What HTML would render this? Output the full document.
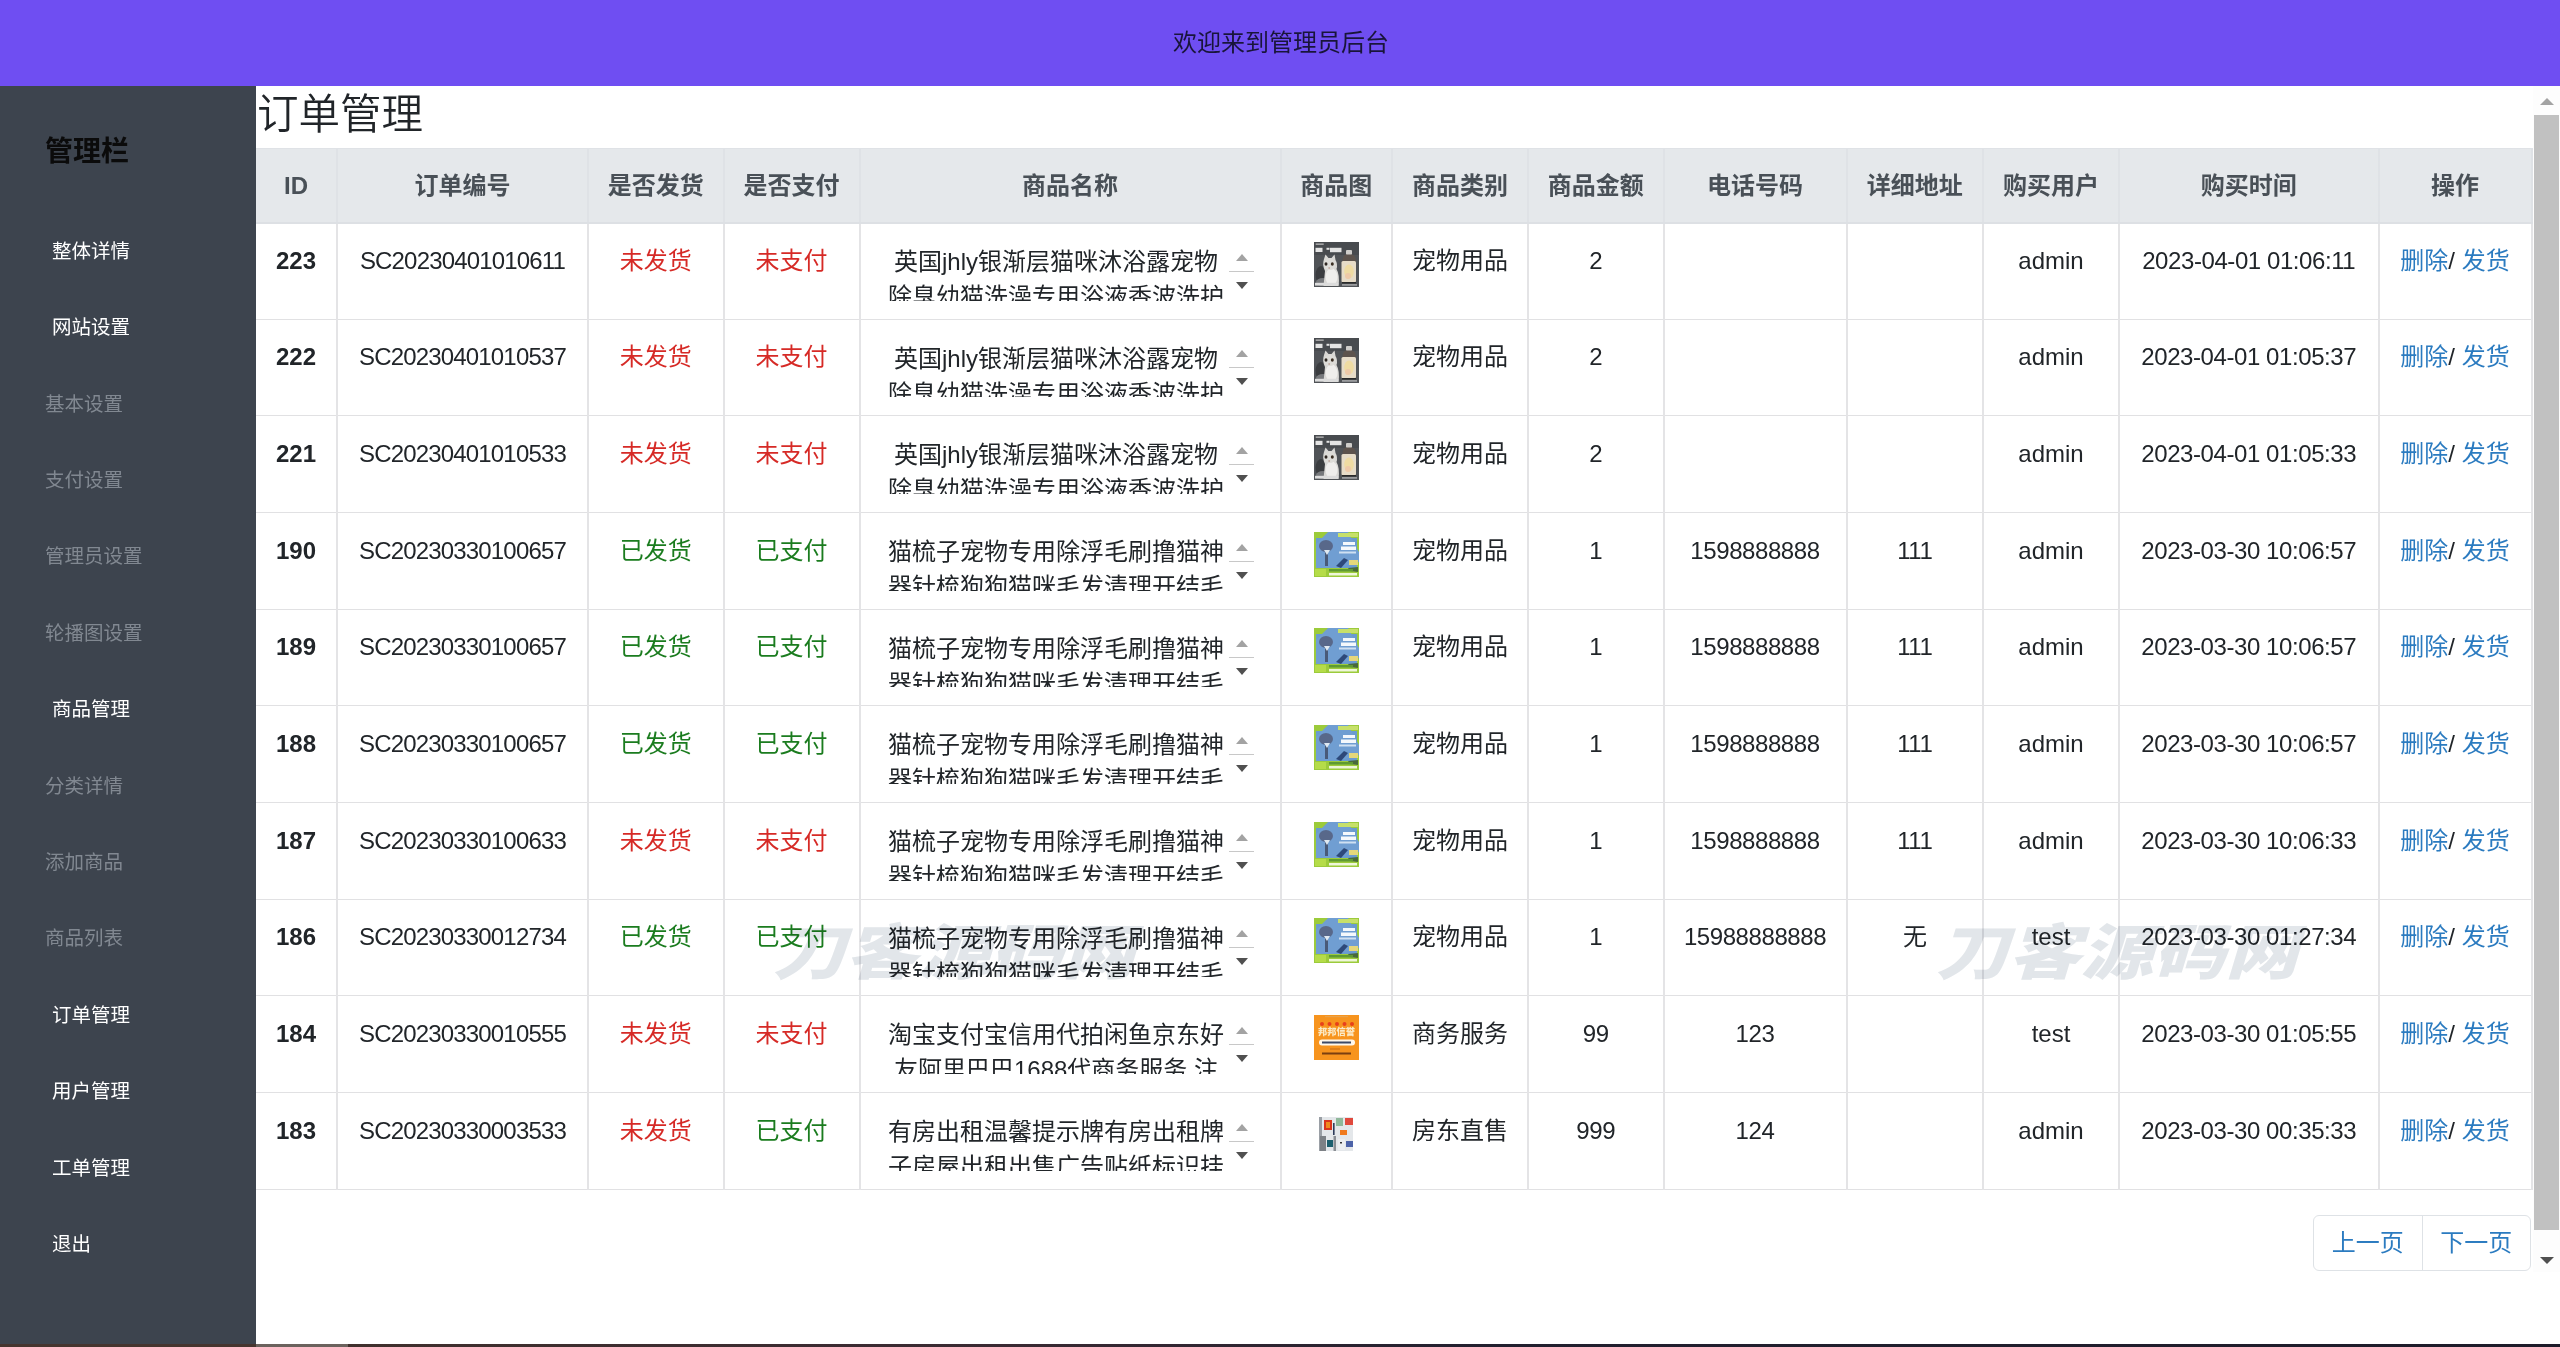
<!DOCTYPE html>
<html lang="zh-CN">
<head>
<meta charset="utf-8">
<title>订单管理</title>
<style>
html,body{margin:0;padding:0}
body{width:2560px;height:1347px;overflow:hidden;background:#fff;position:relative;
 font-family:"Liberation Sans","Noto Sans CJK SC",sans-serif;color:#212529;font-size:24px;line-height:36px}
#top{position:absolute;left:0;top:0;width:2560px;height:86px;box-sizing:border-box;padding-left:2px;background:#6f4ef2;color:#19153a;
 font-size:24px;line-height:86px;text-align:center}
#side{position:absolute;left:0;top:86px;width:256px;height:1261px;background:#3d444e}
#side .sh{position:absolute;left:45px;top:45px;margin:0;font-size:28px;line-height:42px;font-weight:bold;color:#0b0b0b}
#side a{position:absolute;display:block;margin-top:1px;font-size:19.5px;line-height:76.4px;white-space:nowrap}
#side a.m{left:52px;color:#fff}
#side a.s{left:45px;color:#818891}
#main{position:absolute;left:256px;top:86px;width:2304px;height:1261px}
.title{position:absolute;left:1px;top:4px;margin:0;font-size:41.5px;line-height:50px;font-weight:350;color:#212529;white-space:nowrap}
#tb{position:absolute;left:0;top:62px;width:2275.5px;border-collapse:collapse;table-layout:fixed}
#tb th,#tb td{border:1px solid #e1e1e3;border-left:2px solid #e4e4e6;border-right:2px solid #e4e4e6;padding:19.7px 0 0 0;text-align:center;vertical-align:top;white-space:nowrap;overflow:hidden;box-sizing:border-box}
#tb thead th{height:74px;background:#e5e8eb;color:#495057;font-weight:bold;padding-top:19px;border-color:#dfe2e6;border-bottom:2px solid #dde0e4}
#tb tbody tr{height:96.67px}
#tb .id{font-weight:bold}
.r{color:#d62a26}
.g{color:#1b7c1f}
.op a{color:#2b7bc0}
.box{position:relative;margin:1px 0 0 21px;width:372.5px;height:57px;overflow:hidden;text-align:left}
.box .tx{width:347px;text-align:center;line-height:35px;margin:0.3px 0 0 1px}
.sb{position:absolute;right:0;top:0;width:25.5px;height:57px}
.sb i{position:absolute;display:block}
.sb .up{left:7px;top:10px;border:6.5px solid transparent;border-top:0;border-bottom:7px solid #a3a3a3}
.sb .dn{left:7px;top:38px;border:6.5px solid transparent;border-bottom:0;border-top:7px solid #505050}
.sb .th{left:0;top:27px;width:25.5px;height:1px;background:#c8c8c8}
.im svg{display:block;margin:-1px auto 0;position:relative;left:0.5px}
#pg{position:absolute;left:2057px;top:1129px;width:218px;height:56px;border:1px solid #dee2e6;border-radius:6px;box-sizing:border-box;display:flex}
#pg a{flex:1;text-align:center;color:#2b7bc0;font-size:24px;line-height:54px}
#pg a+a{border-left:1px solid #dee2e6}
#vsb{position:absolute;left:2277px;top:0;width:27px;height:1186px;background:#fdfdfd}
#vsb i{position:absolute;display:block}
#vsb .up{left:6.5px;top:12px;border:7px solid transparent;border-top:0;border-bottom:7px solid #a3a3a3}
#vsb .dn{left:6.5px;top:1171px;border:7px solid transparent;border-bottom:0;border-top:7px solid #505050}
#vsb .thumb{left:1px;top:29px;width:25px;height:1115px;background:#c1c1c1}
.wm{position:absolute;font-size:60px;line-height:80px;font-weight:900;font-style:italic;color:#e2e6ea;mix-blend-mode:multiply;white-space:nowrap;transform-origin:0 50%;transform:scaleX(1.205);pointer-events:none;font-family:"Noto Sans CJK SC","Liberation Sans",sans-serif}
#strip{position:absolute;left:0;top:1344px;width:2560px;height:3px;background:linear-gradient(90deg,#46352f 0,#46352f 256px,#6b625d 256px,#6b625d 348px,#40302d 348px,#3a2a33 1000px,#22202f 1500px,#1e1c2a 2560px)}
.lat{letter-spacing:-0.42px}
.no{letter-spacing:-0.83px}
#tb tr>:first-child{border-left:0}
#main{overflow:hidden}
</style>
</head>
<body>
<svg width="0" height="0" style="position:absolute">
<defs>
<filter id="bl" x="-5%" y="-5%" width="110%" height="110%"><feGaussianBlur stdDeviation="0.45"/></filter>
<g id="t-cat">
<rect width="45" height="45" fill="#505357"/>
<rect width="45" height="13" fill="#484b4f"/>
<g filter="url(#bl)">
<ellipse cx="7" cy="33" rx="5.500" ry="9" fill="#3b3d40"/>
<ellipse cx="9" cy="40" rx="7" ry="4" fill="#77797b"/>
<path d="M10 17 L11.500 12.500 L14.500 16 L17.500 16 L20.500 12.500 L21.500 18 Q24 22 22.500 27 Q26 33 24.500 44 L9.500 44 Q10.500 34 11 29 Q8 23 10 17 Z" fill="#d9d8d5"/>
<ellipse cx="17.500" cy="35" rx="6" ry="8.500" fill="#efeeec"/>
<ellipse cx="15.700" cy="22.500" rx="6" ry="5.500" fill="#dddcd8"/>
<ellipse cx="12" cy="22" rx="1.500" ry="1.700" fill="#2d2620"/><ellipse cx="18.300" cy="22" rx="1.500" ry="1.700" fill="#3a2f22"/>
<ellipse cx="15.200" cy="26" rx="1" ry=".7" fill="#b79a90"/>
<rect x="32" y="8" width="6" height="5" rx="1" fill="#cfcdca"/>
<path d="M28.500 20 Q28.500 13 32 12.500 L38 12.500 Q42 13 42 20 Z" fill="#5d534d"/>
<rect x="27.500" y="19" width="14.500" height="21.500" rx="1.500" fill="#e7dcc8"/>
<ellipse cx="35" cy="29.500" rx="4.800" ry="7" fill="#efdba2"/>
<ellipse cx="34" cy="34" rx="3" ry="3" fill="#eec9a8"/>
<rect x="28" y="40" width="14" height="1.500" fill="#2b2a2a"/>
</g>
<g fill="#e4e4e4">
<rect x="1.700" y="1.500" width="8" height="1.300" fill="#b9b9b9"/>
<rect x="1.500" y="5.800" width="7" height="4.200"/><rect x="12.500" y="5.800" width="3" height="2"/><rect x="16" y="5.800" width="11.500" height="4.400"/>
<rect x="1" y="40.800" width="23.500" height="2.800" fill="#dcdcdc"/>
<rect x="28" y="42" width="15" height="1.800" fill="#9b9c9e"/>
</g>
</g>
<g id="t-brush">
<rect width="45" height="45" fill="#9ccb3b"/>
<g filter="url(#bl)">
<rect x="2" y="6" width="41" height="30" fill="#6a9bd0"/>
<path d="M14 0 L34 0 L45 20 L45 30 L24 36 L2 36 L2 12 Z" fill="#6f9ed2"/>
<ellipse cx="12" cy="14" rx="7" ry="6" fill="#59688a"/>
<path d="M11 19 L14 19 L14 34 L11 34 Z" fill="#4a5a78"/>
<path d="M10 18 L16 18 L13 23 Z" fill="#dfe9f2"/>
<rect x="24" y="1" width="20" height="4" fill="#c7e06a"/>
<rect x="29" y="10" width="12" height="3" fill="#f4f8fc"/><rect x="27" y="14.5" width="15" height="3.5" fill="#f4f8fc"/><rect x="25" y="19.5" width="17" height="2" fill="#cfe0f2"/>
<rect x="35" y="28" width="9" height="5" fill="#e5d77a"/>
<path d="M22 34 L30 26 L34 28 L27 36 Z" fill="#2e4a7a"/>
<path d="M34 36 L44 35 L44 40 L36 39 Z" fill="#4a6a3a"/>
<rect x="1" y="37" width="11" height="7" fill="#b5dc4a"/>
<rect x="15" y="37" width="24" height="2.5" fill="#5f9a33"/><rect x="15" y="41" width="28" height="2.5" fill="#eef6d8"/>
</g>
</g>
<g id="t-shop">
<rect width="45" height="45" fill="#f7941e"/>
<g transform="translate(0,-1)">
<rect x="11" y="2" width="23" height="1.200" fill="#e9a24a"/>
<g fill="#e8401c" filter="url(#bl)"><circle cx="8" cy="10" r="2"/><circle cx="15.5" cy="10" r="2"/><circle cx="23" cy="10" r="2"/><circle cx="30.5" cy="10" r="2"/><circle cx="38" cy="10" r="2"/></g>
<text x="22.500" y="21.300" text-anchor="middle" font-family="'Liberation Sans','Noto Sans CJK SC',sans-serif" font-size="9.500" font-weight="900" fill="#fbe9c4" textLength="37" lengthAdjust="spacingAndGlyphs">邦邦信誉</text>
<rect x="5" y="25.500" width="36" height="6" rx="3" fill="#fff7ea"/>
<rect x="8" y="27.500" width="29" height="2" fill="#3d4a66"/>
<rect x="8" y="38.500" width="29" height="2" fill="#7a3f10"/>
<rect x="16" y="34.500" width="10" height="1" fill="#c96a14"/>
</g>
</g>
<g id="t-house">
<rect width="45" height="45" fill="#fff"/>
<g filter="url(#bl)">
<rect x="5" y="5" width="34" height="34" fill="#e4e7ea"/>
<rect x="5" y="5" width="3" height="34" fill="#9a9fa5"/>
<rect x="10" y="8" width="8" height="10" fill="#d9341c"/><rect x="12" y="10" width="4" height="6" fill="#f08a1e"/>
<rect x="19" y="11" width="1.600" height="12" fill="#2d3a5a"/>
<rect x="22" y="6" width="7" height="8" fill="#8fb89a"/>
<rect x="31" y="6" width="8" height="7" fill="#e04a3c"/>
<rect x="26" y="18" width="7" height="5" fill="#f07a1c"/>
<rect x="6" y="24" width="6" height="15" fill="#7d8186"/>
<rect x="13" y="28" width="6" height="7" fill="#1f5f6e"/>
<rect x="19.500" y="24" width="2.500" height="15" fill="#8a8e93"/>
<rect x="24" y="27" width="7" height="11" fill="#eceef0"/><rect x="26" y="30" width="2" height="1.500" fill="#333"/>
<rect x="32" y="29" width="7" height="6" fill="#4e63a8"/>
</g>
</g>
</defs>
</svg>
<div id="top">欢迎来到管理员后台</div>
<div id="side">
<h3 class="sh">管理栏</h3>
<a class="m" style="top:125.8px">整体详情</a>
<a class="m" style="top:202.2px">网站设置</a>
<a class="s" style="top:278.6px">基本设置</a>
<a class="s" style="top:355.0px">支付设置</a>
<a class="s" style="top:431.4px">管理员设置</a>
<a class="s" style="top:507.8px">轮播图设置</a>
<a class="m" style="top:584.2px">商品管理</a>
<a class="s" style="top:660.6px">分类详情</a>
<a class="s" style="top:737.0px">添加商品</a>
<a class="s" style="top:813.4px">商品列表</a>
<a class="m" style="top:889.8px">订单管理</a>
<a class="m" style="top:966.2px">用户管理</a>
<a class="m" style="top:1042.6px">工单管理</a>
<a class="m" style="top:1119.0px">退出</a>
</div>
<div id="main">
<h3 class="title">订单管理</h3>
<table id="tb">
<colgroup><col style="width:81.0px"><col style="width:251.0px"><col style="width:135.5px"><col style="width:136.0px"><col style="width:421.0px"><col style="width:111.5px"><col style="width:136.0px"><col style="width:135.5px"><col style="width:183.0px"><col style="width:136.5px"><col style="width:136.0px"><col style="width:259.5px"><col style="width:153.0px"></colgroup>
<thead><tr><th>ID</th><th>订单编号</th><th>是否发货</th><th>是否支付</th><th>商品名称</th><th>商品图</th><th>商品类别</th><th>商品金额</th><th>电话号码</th><th>详细地址</th><th>购买用户</th><th>购买时间</th><th>操作</th></tr></thead>
<tbody>
<tr><th class="id">223</th><td class="no">SC20230401010611</td><td class="r">未发货</td><td class="r">未支付</td><td class="nm"><div class="box"><div class="tx">英国jhly银渐层猫咪沐浴露宠物<br>除臭幼猫洗澡专用浴液香波洗护</div><div class="sb"><i class="up"></i><i class="th"></i><i class="dn"></i></div></div></td><td class="im"><svg width="45" height="45" viewBox="0 0 45 45"><use href="#t-cat"/></svg></td><td>宠物用品</td><td class="lat">2</td><td class="lat"></td><td class="lat"></td><td>admin</td><td class="lat tm">2023-04-01 01:06:11</td><td class="op"><a>删除</a>/ <a>发货</a></td></tr>
<tr><th class="id">222</th><td class="no">SC20230401010537</td><td class="r">未发货</td><td class="r">未支付</td><td class="nm"><div class="box"><div class="tx">英国jhly银渐层猫咪沐浴露宠物<br>除臭幼猫洗澡专用浴液香波洗护</div><div class="sb"><i class="up"></i><i class="th"></i><i class="dn"></i></div></div></td><td class="im"><svg width="45" height="45" viewBox="0 0 45 45"><use href="#t-cat"/></svg></td><td>宠物用品</td><td class="lat">2</td><td class="lat"></td><td class="lat"></td><td>admin</td><td class="lat tm">2023-04-01 01:05:37</td><td class="op"><a>删除</a>/ <a>发货</a></td></tr>
<tr><th class="id">221</th><td class="no">SC20230401010533</td><td class="r">未发货</td><td class="r">未支付</td><td class="nm"><div class="box"><div class="tx">英国jhly银渐层猫咪沐浴露宠物<br>除臭幼猫洗澡专用浴液香波洗护</div><div class="sb"><i class="up"></i><i class="th"></i><i class="dn"></i></div></div></td><td class="im"><svg width="45" height="45" viewBox="0 0 45 45"><use href="#t-cat"/></svg></td><td>宠物用品</td><td class="lat">2</td><td class="lat"></td><td class="lat"></td><td>admin</td><td class="lat tm">2023-04-01 01:05:33</td><td class="op"><a>删除</a>/ <a>发货</a></td></tr>
<tr><th class="id">190</th><td class="no">SC20230330100657</td><td class="g">已发货</td><td class="g">已支付</td><td class="nm"><div class="box"><div class="tx">猫梳子宠物专用除浮毛刷撸猫神<br>器针梳狗狗猫咪毛发清理开结毛</div><div class="sb"><i class="up"></i><i class="th"></i><i class="dn"></i></div></div></td><td class="im"><svg width="45" height="45" viewBox="0 0 45 45"><use href="#t-brush"/></svg></td><td>宠物用品</td><td class="lat">1</td><td class="lat">1598888888</td><td class="lat">111</td><td>admin</td><td class="lat tm">2023-03-30 10:06:57</td><td class="op"><a>删除</a>/ <a>发货</a></td></tr>
<tr><th class="id">189</th><td class="no">SC20230330100657</td><td class="g">已发货</td><td class="g">已支付</td><td class="nm"><div class="box"><div class="tx">猫梳子宠物专用除浮毛刷撸猫神<br>器针梳狗狗猫咪毛发清理开结毛</div><div class="sb"><i class="up"></i><i class="th"></i><i class="dn"></i></div></div></td><td class="im"><svg width="45" height="45" viewBox="0 0 45 45"><use href="#t-brush"/></svg></td><td>宠物用品</td><td class="lat">1</td><td class="lat">1598888888</td><td class="lat">111</td><td>admin</td><td class="lat tm">2023-03-30 10:06:57</td><td class="op"><a>删除</a>/ <a>发货</a></td></tr>
<tr><th class="id">188</th><td class="no">SC20230330100657</td><td class="g">已发货</td><td class="g">已支付</td><td class="nm"><div class="box"><div class="tx">猫梳子宠物专用除浮毛刷撸猫神<br>器针梳狗狗猫咪毛发清理开结毛</div><div class="sb"><i class="up"></i><i class="th"></i><i class="dn"></i></div></div></td><td class="im"><svg width="45" height="45" viewBox="0 0 45 45"><use href="#t-brush"/></svg></td><td>宠物用品</td><td class="lat">1</td><td class="lat">1598888888</td><td class="lat">111</td><td>admin</td><td class="lat tm">2023-03-30 10:06:57</td><td class="op"><a>删除</a>/ <a>发货</a></td></tr>
<tr><th class="id">187</th><td class="no">SC20230330100633</td><td class="r">未发货</td><td class="r">未支付</td><td class="nm"><div class="box"><div class="tx">猫梳子宠物专用除浮毛刷撸猫神<br>器针梳狗狗猫咪毛发清理开结毛</div><div class="sb"><i class="up"></i><i class="th"></i><i class="dn"></i></div></div></td><td class="im"><svg width="45" height="45" viewBox="0 0 45 45"><use href="#t-brush"/></svg></td><td>宠物用品</td><td class="lat">1</td><td class="lat">1598888888</td><td class="lat">111</td><td>admin</td><td class="lat tm">2023-03-30 10:06:33</td><td class="op"><a>删除</a>/ <a>发货</a></td></tr>
<tr><th class="id">186</th><td class="no">SC20230330012734</td><td class="g">已发货</td><td class="g">已支付</td><td class="nm"><div class="box"><div class="tx">猫梳子宠物专用除浮毛刷撸猫神<br>器针梳狗狗猫咪毛发清理开结毛</div><div class="sb"><i class="up"></i><i class="th"></i><i class="dn"></i></div></div></td><td class="im"><svg width="45" height="45" viewBox="0 0 45 45"><use href="#t-brush"/></svg></td><td>宠物用品</td><td class="lat">1</td><td class="lat">15988888888</td><td class="lat">无</td><td>test</td><td class="lat tm">2023-03-30 01:27:34</td><td class="op"><a>删除</a>/ <a>发货</a></td></tr>
<tr><th class="id">184</th><td class="no">SC20230330010555</td><td class="r">未发货</td><td class="r">未支付</td><td class="nm"><div class="box"><div class="tx">淘宝支付宝信用代拍闲鱼京东好<br>友阿里巴巴1688代商务服务 注</div><div class="sb"><i class="up"></i><i class="th"></i><i class="dn"></i></div></div></td><td class="im"><svg width="45" height="45" viewBox="0 0 45 45"><use href="#t-shop"/></svg></td><td>商务服务</td><td class="lat">99</td><td class="lat">123</td><td class="lat"></td><td>test</td><td class="lat tm">2023-03-30 01:05:55</td><td class="op"><a>删除</a>/ <a>发货</a></td></tr>
<tr><th class="id">183</th><td class="no">SC20230330003533</td><td class="r">未发货</td><td class="g">已支付</td><td class="nm"><div class="box"><div class="tx">有房出租温馨提示牌有房出租牌<br>子房屋出租出售广告贴纸标识挂</div><div class="sb"><i class="up"></i><i class="th"></i><i class="dn"></i></div></div></td><td class="im"><svg width="45" height="45" viewBox="0 0 45 45"><use href="#t-house"/></svg></td><td>房东直售</td><td class="lat">999</td><td class="lat">124</td><td class="lat"></td><td>admin</td><td class="lat tm">2023-03-30 00:35:33</td><td class="op"><a>删除</a>/ <a>发货</a></td></tr>
</tbody>
</table>
<div id="pg"><a>上一页</a><a>下一页</a></div>
<div id="vsb"><i class="up"></i><i class="thumb"></i><i class="dn"></i></div>
</div>
<div class="wm" style="left:772.5px;top:907.5px">刀客源码网</div>
<div class="wm" style="left:1936px;top:907.5px">刀客源码网</div>
<div id="strip"></div>
</body>
</html>
